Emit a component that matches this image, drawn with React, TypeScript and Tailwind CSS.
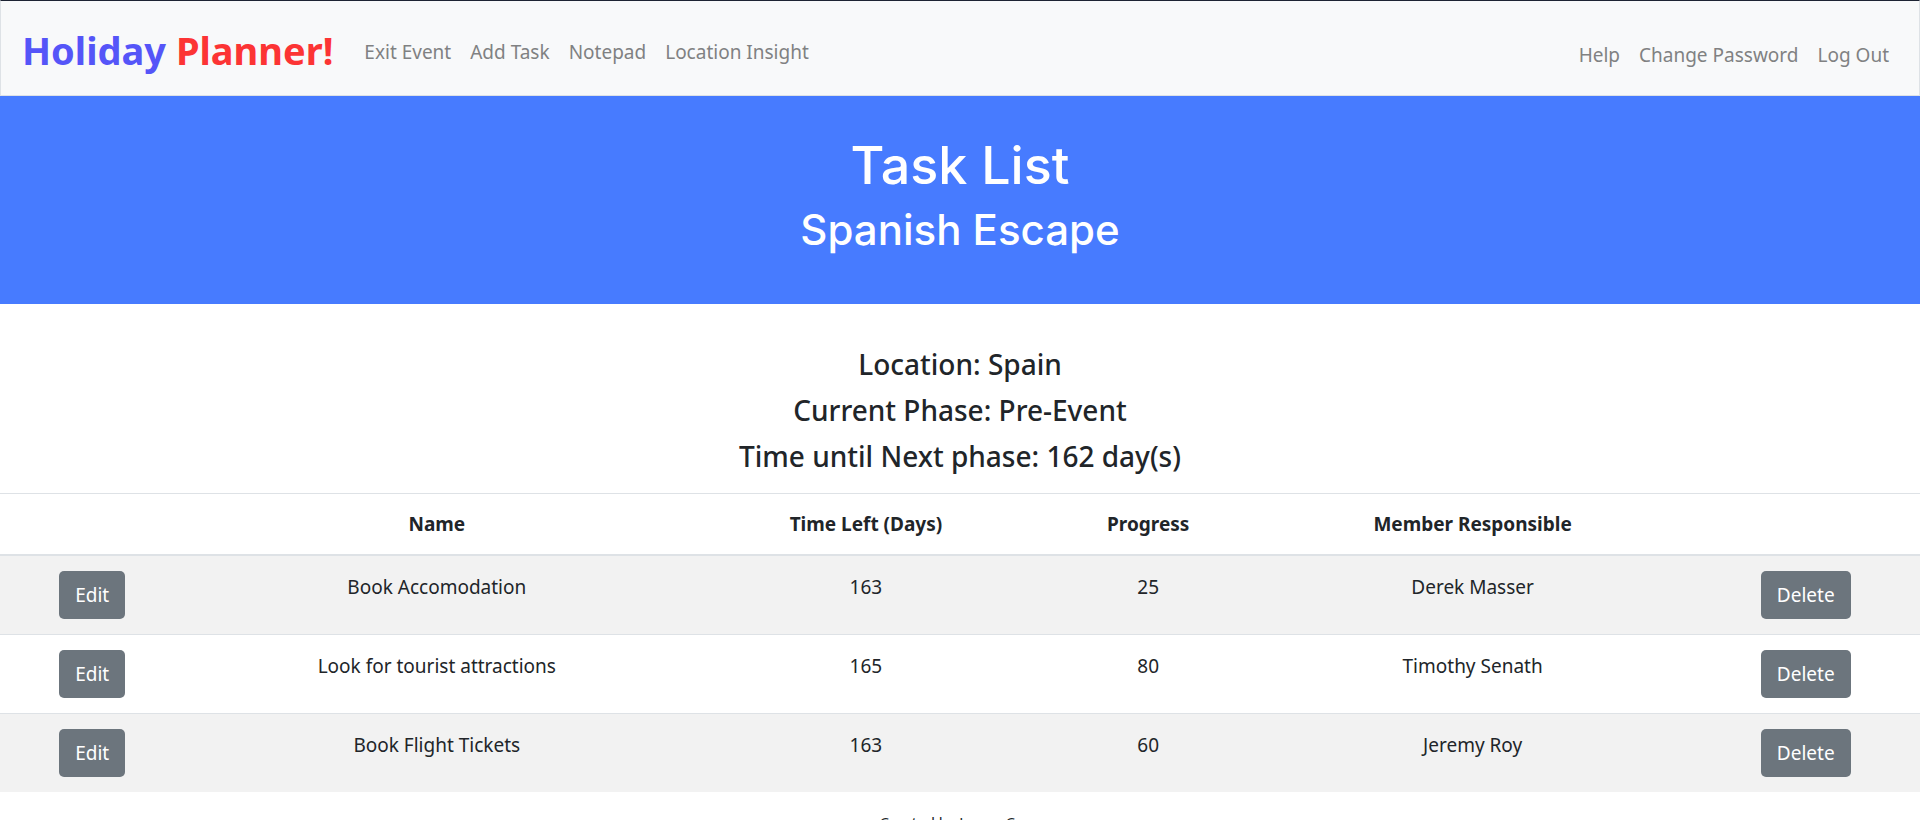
const leftLinks = ["Exit Event", "Add Task", "Notepad", "Location Insight"];
const rightLinks = ["Help", "Change Password", "Log Out"];

const tasks = [
  { name: "Book Accomodation", days: 163, progress: 25, member: "Derek Masser" },
  { name: "Look for tourist attractions", days: 165, progress: 80, member: "Timothy Senath" },
  { name: "Book Flight Tickets", days: 163, progress: 60, member: "Jeremy Roy" },
];

function NavLinks({ items }: { items: string[] }) {
  return (
    <ul className="flex gap-[19px]">
      {items.map((item) => (
        <li key={item}>
          <a href="#" className="text-[#808182]">{item}</a>
        </li>
      ))}
    </ul>
  );
}

function ActionButton({ label, task }: { label: string; task: string }) {
  return (
    <button
      type="button"
      aria-label={`${label} ${task}`}
      className="h-12 rounded-[5px] bg-[#6c757d] px-4 text-white"
    >
      {label}
    </button>
  );
}

export default function App() {
  return (
    <div className="h-screen overflow-hidden bg-white font-['Noto_Sans',sans-serif] text-[19px] leading-[30px] text-[#212529]">
      <nav className="flex h-24 items-center border border-t-[#1d2333] border-x-[#dee2e6] border-b-[#dee2e6] bg-[#f8f9fa] px-[21px]">
        <a href="#" className="mr-[31px] pt-1 text-[38px] font-bold leading-[60px] whitespace-nowrap">
          <span className="text-[#5555f8]">Holiday</span> <span className="text-[#fc3434]">Planner!</span>
        </a>
        <div className="flex grow justify-between pt-[11px] pr-[9px]">
          <NavLinks items={leftLinks} />
          <div className="pt-[3px]">
            <NavLinks items={rightLinks} />
          </div>
        </div>
      </nav>

      <header className="bg-[#477bff] pt-10 pb-12 text-center font-['Inter',sans-serif] font-medium text-white">
        <h1 className="text-[52px] leading-[60px]">Task List</h1>
        <h2 className="mt-2 text-[42px] leading-[52px]">Spanish Escape</h2>
      </header>

      <main>
        <section className="flex flex-col gap-2 pt-[41px] pb-[18px] text-center text-[28px] font-medium leading-[38px]">
          <h3>Location: Spain</h3>
          <h3>Current Phase: Pre-Event</h3>
          <h3>Time until Next phase: 162 day(s)</h3>
        </section>

        <table className="w-full table-fixed border-collapse text-center">
          <colgroup>
            <col className="w-[9.6%]" />
            <col className="w-[26.3%]" />
            <col className="w-[18.4%]" />
            <col className="w-[11%]" />
            <col className="w-[22.8%]" />
            <col className="w-[11.9%]" />
          </colgroup>
          <thead>
            <tr className="h-[61px] border-t border-b-2 border-[#dee2e6] font-bold">
              <td />
              <th scope="col">Name</th>
              <th scope="col">Time Left (Days)</th>
              <th scope="col">Progress</th>
              <th scope="col">Member Responsible</th>
              <td />
            </tr>
          </thead>
          <tbody>
            {tasks.map((task) => (
              <tr key={task.name} className="border-[#dee2e6] align-top odd:bg-[#f2f2f2] not-first:border-t">
                <td className="py-[15px]"><ActionButton label="Edit" task={task.name} /></td>
                <td className="py-4">{task.name}</td>
                <td className="py-4">{task.days}</td>
                <td className="py-4">{task.progress}</td>
                <td className="py-4">{task.member}</td>
                <td className="py-[15px]"><ActionButton label="Delete" task={task.name} /></td>
              </tr>
            ))}
          </tbody>
        </table>
      </main>

      <footer className="pt-[15px] text-center text-[15px]">Created by James Cons</footer>
    </div>
  );
}
